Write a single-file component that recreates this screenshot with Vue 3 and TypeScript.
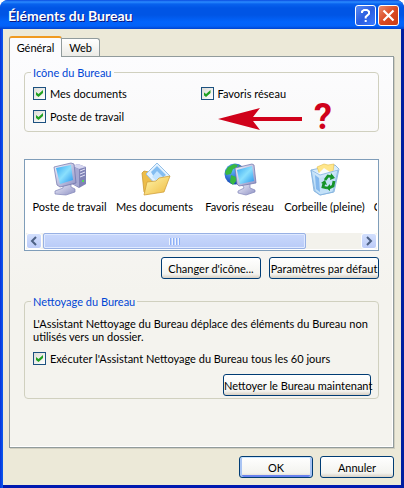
<script setup lang="ts">
import { ref } from 'vue'

const documents = ref(true)
const network = ref(true)
const computer = ref(true)
const wizard = ref(true)

const icons = [
  { id: 'computer', label: 'Poste de travail' },
  { id: 'documents', label: 'Mes documents' },
  { id: 'network', label: 'Favoris réseau' },
  { id: 'bin', label: 'Corbeille (pleine)' },
  { id: 'empty', label: 'Corbeille (vide)' },
]
</script>

<template>
  <main class="window">
    <header class="titlebar">
      <h1>Éléments du Bureau</h1>
      <button class="caption help" type="button" aria-label="Aide">
        <svg width="19" height="19" viewBox="0 0 19 19" aria-hidden="true">
          <path d="M6 7V5.500L8 4h3l2 1.500v2.300L9.700 11v1.500M9.700 14v2" fill="none" stroke="#fff" stroke-width="2" />
        </svg>
      </button>
      <button class="caption close" type="button" aria-label="Fermer">
        <svg width="19" height="19" viewBox="0 0 19 19" aria-hidden="true">
          <path d="M4.500 4.500l10 10M14.500 4.500l-10 10" stroke="#fff" stroke-width="2.200" />
        </svg>
      </button>
    </header>

    <div class="body">
      <nav class="tabs" role="tablist">
        <button class="tab active" type="button" role="tab" aria-selected="true">Général</button>
        <button class="tab" type="button" role="tab" aria-selected="false">Web</button>
      </nav>

      <section class="panel" role="tabpanel">
        <fieldset class="group desktop">
          <legend>Icône du Bureau</legend>
          <div class="checks">
            <label class="check"><input v-model="documents" type="checkbox" />Mes documents</label>
            <label class="check"><input v-model="network" type="checkbox" />Favoris réseau</label>
            <label class="check"><input v-model="computer" type="checkbox" />Poste de travail</label>
          </div>
          <div class="note">
            <svg width="84" height="22" viewBox="0 0 84 22" aria-hidden="true">
              <path d="M0 11L42 0l-7 9h49v4H35l7 9z" fill="#d0021b" />
            </svg>
            <span>?</span>
          </div>
        </fieldset>

        <div class="list">
          <ul class="items">
            <li v-for="icon in icons" :key="icon.id" class="item">
              <svg width="34" height="34" viewBox="0 0 34 34" aria-hidden="true">
                <defs>
                  <linearGradient id="screen" x1="0" y1="0" x2="1" y2="1">
                    <stop offset="0" stop-color="#35a6f2" />
                    <stop offset=".5" stop-color="#8be0fd" />
                    <stop offset="1" stop-color="#2794ee" />
                  </linearGradient>
                  <linearGradient id="metal" x1="0" y1="0" x2="1" y2="1">
                    <stop offset="0" stop-color="#f3f3fd" />
                    <stop offset="1" stop-color="#8f92c4" />
                  </linearGradient>
                  <linearGradient id="folder" x1="0" y1="0" x2="1" y2="1">
                    <stop offset="0" stop-color="#fff8b0" />
                    <stop offset="1" stop-color="#efb93e" />
                  </linearGradient>
                  <radialGradient id="globe" cx=".35" cy=".3" r=".8">
                    <stop offset="0" stop-color="#62b8ff" />
                    <stop offset="1" stop-color="#0735a8" />
                  </radialGradient>
                </defs>
                <g v-if="icon.id === 'computer'">
                  <path d="M19 4l6-2 8 3v17l-7 4-7-4z" fill="#8083b6" />
                  <path d="M19 4l6-2 8 3-7 2z" fill="#d5d6f0" />
                  <path d="M19 4l7 3v18l-7-3z" fill="#a5a8d2" />
                  <path d="M27 9l5-2M27 12l5-2M27 15l5-2" stroke="#e3e4f7" />
                  <path d="M29 18h2v2h-2z" fill="#55dc55" />
                  <path d="M10 22l8-1v4l4 2v3l-9 3-11-1v-3l8-3z" fill="url(#metal)" stroke="#8185b7" stroke-width=".7" />
                  <path d="M1 5l17-4 3 1 2 19-16 4-3-2z" fill="url(#metal)" stroke="#6b70a8" stroke-width=".7" />
                  <path d="M3 6l15-3 2 15-13 4z" fill="url(#screen)" />
                </g>
                <g v-else-if="icon.id === 'documents'">
                  <path d="M4 11l2-2 5 1 2 3 12-3 1 18-18 4-2-2z" fill="#edbd48" stroke="#c99a34" stroke-width=".8" />
                  <path d="M8 12L19 1l13 13-13 10z" fill="#e3f2ff" stroke="#94c0e8" />
                  <path d="M13 10l6-6 9 9-9 7z" fill="#83bdf1" />
                  <path d="M14 15l5-6 6 6-5 5z" fill="#c3e4ff" />
                  <path d="M9 20l9-1 3-3 11-2-6 16-20 3z" fill="url(#folder)" stroke="#d2a13c" stroke-width=".8" />
                </g>
                <g v-else-if="icon.id === 'network'">
                  <circle cx="12" cy="12" r="10.500" fill="url(#globe)" />
                  <path d="M5 5l6-3 4 1-2 3-3 1-2 5-5 1-1-3zM8 13l5 2 1 3-4 5-3-3zM16 3l5 4-3 3-3-2z" fill="#38b840" />
                  <path d="M19 22l8-1v5l5 2v2l-9 3-8-2v-2l6-3z" fill="url(#metal)" stroke="#8185b7" stroke-width=".7" />
                  <path d="M12 6l17-4 2 1 2 18-17 3-2-2z" fill="url(#metal)" stroke="#6b70a8" stroke-width=".7" />
                  <path d="M14 8l15-4 2 15-14 3z" fill="url(#screen)" />
                </g>
                <g v-else>
                  <path d="M3 8l24-5 4 4-5 23-14 3-6-4z" fill="#d8ecfb" stroke="#8fb9e0" />
                  <path d="M9 5l7-3 4 1 6-1-1 8-13 3z" fill="#ffe68a" stroke="#e2bd4a" stroke-width=".6" />
                  <path d="M4 9l7 2 5-5 6 4 8-3-5 6-14 3z" fill="#f8fcff" />
                  <path d="M3 8l9 5 18-5-5 22-13 3-5-4z" fill="#b9dbf6" fill-opacity=".65" stroke="#83b3df" stroke-width=".8" />
                  <path d="M7 13l4 3 1 14-4-3z" fill="#83b8ed" />
                  <g fill="none" stroke="#159329" stroke-width="2.800">
                    <path d="M17 18l3-4 5 1" />
                    <path d="M26 19l-1 5-4 2" />
                    <path d="M16 21l-1 4 4 1" />
                  </g>
                  <path d="M23 11l4 5-5 2zM22 22v7l-4-3zM13 21l4-3 2 5z" fill="#159329" />
                </g>
              </svg>
              <span>{{ icon.label }}</span>
            </li>
          </ul>
          <div class="scrollbar">
            <button class="arrow" type="button" aria-label="Défiler à gauche">
              <svg width="8" height="10" viewBox="0 0 8 10" aria-hidden="true"><path d="M6 1L2 5l4 4" /></svg>
            </button>
            <div class="track"><div class="thumb"><i></i><i></i><i></i><i></i></div></div>
            <button class="arrow" type="button" aria-label="Défiler à droite">
              <svg width="8" height="10" viewBox="0 0 8 10" aria-hidden="true"><path d="M2 1l4 4-4 4" /></svg>
            </button>
          </div>
        </div>

        <div class="actions">
          <button class="btn change" type="button">Changer d'icône...</button>
          <button class="btn defaults" type="button">Paramètres par défaut</button>
        </div>

        <fieldset class="group cleanup">
          <legend>Nettoyage du Bureau</legend>
          <p>L'Assistant Nettoyage du Bureau déplace des éléments du Bureau non utilisés vers un dossier.</p>
          <label class="check"><input v-model="wizard" type="checkbox" />Exécuter l'Assistant Nettoyage du Bureau tous les 60 jours</label>
          <button class="btn clean" type="button">Nettoyer le Bureau maintenant</button>
        </fieldset>
      </section>

      <footer class="footer">
        <button class="btn primary" type="button">OK</button>
        <button class="btn" type="button">Annuler</button>
      </footer>
    </div>
  </main>
</template>

<style>
body {
  margin: 0;
  background: #fff;
}
</style>

<style scoped>
* {
  box-sizing: border-box;
}
.window {
  display: flex;
  flex-direction: column;
  min-height: 100vh;
  overflow: hidden;
  border-radius: 8px 8px 0 0;
  background: linear-gradient(90deg, #0831d9, #0a5cf0 3px, #0831d9 50%, #001ea0);
  font: 11px/13px Lato, "Liberation Sans", sans-serif;
  color: #000;
}
button {
  font: inherit;
  color: inherit;
  padding: 0;
  white-space: nowrap;
}
.titlebar {
  display: flex;
  align-items: center;
  gap: 2px;
  height: 29px;
  padding: 2px 5px 0 8px;
  background: linear-gradient(#0a4be0 0, #2a8bff 2px, #0862ee 4px, #0055e5 8px, #0055e5 15px, #0264fc 22px, #0362f8 26px, #0043cf 29px);
}
h1 {
  flex: 1;
  margin: 0;
  font: bold 14px/20px Lato, "Open Sans", sans-serif;
  color: #fff;
  text-shadow: 1px 1px 0 #0a1883;
}
.caption {
  display: grid;
  place-items: center;
  width: 21px;
  height: 21px;
  border: 1px solid #fff;
  border-radius: 3px;
}
.help {
  background: linear-gradient(135deg, #5a8cf3, #2a5de0 50%, #3c7bff);
}
.close {
  background: linear-gradient(135deg, #ec8a6c, #da4a23 50%, #c93c12);
}
.body {
  flex: 1;
  display: flex;
  flex-direction: column;
  margin: 0 3px;
  padding: 7px 7px 7px 6px;
  background: #ece9d8;
  border-bottom: 3px solid #0019b0;
}
.tabs {
  display: flex;
  align-items: flex-end;
}
.tab {
  width: 38px;
  height: 18px;
  border: 1px solid #919b9c;
  border-left: 0;
  border-bottom: 0;
  border-radius: 0 3px 0 0;
  background: linear-gradient(#fff, #ecebe6);
}
.tab.active {
  position: relative;
  z-index: 1;
  width: 53px;
  height: 21px;
  margin-bottom: -1px;
  border-left: 1px solid #919b9c;
  border-top: 2px solid #f09a20;
  border-radius: 3px 3px 0 0;
  background: #fcfcfe;
}
.panel {
  flex: 1;
  display: flex;
  flex-direction: column;
  padding: 9px 14px 0 14px;
  border: 1px solid #919b9c;
  box-shadow: 1px 1px 0 #d0cebf, inset -1px -1px 0 #fff;
  background: linear-gradient(#fcfcfe, #f4f3ee 60%);
}
.group {
  position: relative;
  min-width: 0;
  margin: 0;
  border: 1px solid #d0d0bf;
  border-radius: 4px;
}
legend {
  padding: 0 2px;
  color: #0046d5;
}
.desktop {
  padding: 8px 10px 8px 6px;
}
.checks {
  display: grid;
  grid-template-columns: 1fr 1fr;
  row-gap: 10px;
  padding-left: 2px;
}
.check {
  display: flex;
  align-items: center;
  gap: 4px;
}
.check input {
  appearance: none;
  flex: none;
  display: grid;
  place-items: center;
  width: 13px;
  height: 13px;
  margin: 0;
  border: 1px solid #1c5180;
  background: linear-gradient(135deg, #dcdcd7, #fff);
}
.check input:checked::before {
  content: "";
  width: 7px;
  height: 7px;
  background: #21a121;
  clip-path: polygon(0 29%, 36% 57%, 100% 0, 100% 43%, 36% 100%, 0 71%);
}
.note {
  position: absolute;
  left: 193px;
  top: 23px;
  display: flex;
  align-items: center;
  gap: 12px;
  color: #d0021b;
}
.note svg {
  margin-top: 4px;
}
.note span {
  font: bold 36px/30px Roboto, "Liberation Sans", sans-serif;
}
.list {
  margin-top: 27px;
  padding: 0 1px 1px;
  border: 1px solid #7f9db9;
  background: #fff;
  overflow: hidden;
}
.items {
  display: flex;
  margin: 0;
  padding: 2px 0 20px 1px;
  list-style: none;
  overflow: hidden;
}
.item {
  flex: none;
  display: flex;
  flex-direction: column;
  align-items: center;
  gap: 4px;
  width: 85px;
  white-space: nowrap;
}
.scrollbar {
  display: flex;
  height: 16px;
  background: #f3f2ec;
}
.arrow {
  display: grid;
  place-items: center;
  width: 16px;
  border: 1px solid #fff;
  border-radius: 3px;
  background: linear-gradient(#d2dffd, #bccbf8);
}
.arrow path {
  fill: none;
  stroke: #4d6185;
  stroke-width: 2;
}
.track {
  flex: 1;
  padding: 0 1px;
}
.thumb {
  display: flex;
  align-items: center;
  justify-content: center;
  gap: 1px;
  width: 83%;
  height: 16px;
  border: 1px solid #98b1e4;
  border-radius: 2px;
  background: linear-gradient(#c9d8fc, #b9cbf7);
  box-shadow: inset 0 0 0 1px #dfe9ff;
}
.thumb i {
  width: 2px;
  height: 7px;
  border-left: 1px solid #eef4fe;
  border-right: 1px solid #8cb0f8;
}
.actions {
  display: flex;
  justify-content: flex-end;
  gap: 8px;
  margin-top: 6px;
}
.btn {
  width: 74px;
  height: 22px;
  border: 1px solid #003c74;
  border-radius: 3px;
  background: linear-gradient(#fff, #f3f3ef 80%, #d8d0c4);
}
.change {
  width: 100px;
}
.defaults {
  width: 110px;
}
.primary {
  box-shadow: inset 0 1px 0 #cee7ff, inset 2px 0 0 #a9c4f3, inset -2px 0 0 #a9c4f3, inset 0 -2px 0 #6982ee;
}
.cleanup {
  display: flex;
  flex-direction: column;
  margin-top: 16px;
  padding: 9px 7px 2px 8px;
}
.cleanup legend {
  margin-left: -2px;
}
.cleanup p {
  margin: 0 0 9px;
}
.clean {
  align-self: flex-end;
  width: 148px;
  margin-top: 9px;
}
.footer {
  display: flex;
  justify-content: flex-end;
  gap: 7px;
  margin-top: 8px;
}
</style>
